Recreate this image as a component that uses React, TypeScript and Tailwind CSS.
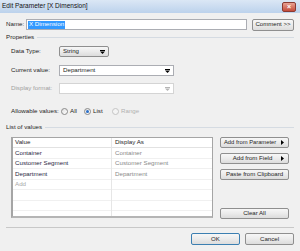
import { ReactNode } from 'react';

const Btn = ({ children, className = '' }: { children: ReactNode; className?: string }) => (
    <div
        className={`flex items-center justify-center whitespace-nowrap rounded-[2px] border border-[#8f8f8f] bg-linear-to-b from-[#f7f7f7] via-[#ebebeb] to-[#dcdcdc] text-[6.1px] text-[#1e1e1e] ${className}`}
    >
        {children}
    </div>
);

const Arrow = ({ color = '#000' }: { color?: string }) => (
    <svg width="5" height="4" viewBox="0 0 5 4">
        <rect x="0" y="0" width="5" height="1" fill={color} />
        <path d="M0 1.5 H5 L2.5 4 Z" fill={color} />
    </svg>
);

const SideArrow = () => (
    <svg width="3" height="5" viewBox="0 0 3 5">
        <path d="M0 0 L3 2.5 L0 5 Z" fill="#000" />
    </svg>
);

const Radio = ({ checked = false, disabled = false }: { checked?: boolean; disabled?: boolean }) => (
    <div
        className={`flex size-[7px] items-center justify-center rounded-full border ${disabled ? 'border-[#c4c4c4] bg-[#f4f4f4]' : 'border-[#8a8a8a] bg-linear-to-br from-[#e0e0e0] to-[#ffffff]'}`}
    >
        {checked && <div className="size-[3px] rounded-full bg-[#2a6fc9]" />}
    </div>
);

const rows = [
    { value: 'Container', display: 'Container' },
    { value: 'Customer Segment', display: 'Customer Segment' },
    { value: 'Department', display: 'Department' },
    { value: 'Add', display: '', add: true },
    { value: '', display: '' },
    { value: '', display: '' },
    { value: '', display: '' },
];

const App = () => {
    return (
        <div className="flex h-[251px] w-[300px] flex-col overflow-hidden whitespace-nowrap bg-[#f0f0f0] font-['Liberation_Sans',Arial,sans-serif] text-[6.2px] leading-none text-[#1e1e1e]">
            {/* Title bar */}
            <div className="flex h-[13px] shrink-0 items-center justify-between bg-linear-to-b from-[#dbe7f5] to-[#bcd2ec] pl-[2px] pr-[4px]">
                <span className="text-[6.5px] text-[#111]">Edit Parameter [X Dimension]</span>
                <div className="flex h-[10px] w-[14px] items-center justify-center rounded-[2px] border border-[#8a3a32] bg-linear-to-b from-[#e8a193] to-[#c44a3a] text-[7px] font-bold text-white">
                    ×
                </div>
            </div>

            {/* Name */}
            <div className="mt-[6px] flex h-[11px] items-center pl-[6px]">
                <span className="w-[20px]">Name:</span>
                <div className="flex h-[11px] w-[221px] items-center border border-[#abadb3] bg-white pl-[1px]">
                    <span className="flex h-[8px] items-center bg-[#3399ff] px-[1px] text-white">X Dimension</span>
                </div>
                <Btn className="ml-[5px] h-[12px] w-[42px]">Comment &gt;&gt;</Btn>
            </div>

            {/* Properties header */}
            <div className="mt-[3px] flex h-[8px] items-center pl-[6px] pr-[6px]">
                <span>Properties</span>
                <div className="ml-[3px] h-px flex-1 bg-[#d5dbe2]" />
            </div>

            {/* Data type */}
            <div className="mt-[5px] flex h-[11px] items-center pl-[11px]">
                <span className="w-[48px]">Data Type:</span>
                <Btn className="h-[11px] w-[50px] !justify-between pl-[3px] pr-[3px]">
                    <span>String</span>
                    <Arrow />
                </Btn>
            </div>

            {/* Current value */}
            <div className="mt-[8px] flex h-[11px] items-center pl-[11px]">
                <span className="w-[48px]">Current value:</span>
                <div className="flex h-[11px] w-[115px] items-center justify-between border border-[#abadb3] bg-white pl-[3px] pr-[3px]">
                    <span>Department</span>
                    <Arrow />
                </div>
            </div>

            {/* Display format */}
            <div className="mt-[7px] flex h-[11px] items-center pl-[11px]">
                <span className="w-[48px] text-[#a0a0a0]">Display format:</span>
                <div className="flex h-[11px] w-[115px] items-center justify-end border border-[#d4d4d4] bg-white pr-[3px]">
                    <Arrow color="#b5b5b5" />
                </div>
            </div>

            {/* Allowable values */}
            <div className="mt-[12px] flex h-[10px] items-center pl-[11px]">
                <span className="w-[50px]">Allowable values:</span>
                <Radio />
                <span className="ml-[2px] w-[14px]">All</span>
                <Radio checked />
                <span className="ml-[2px] w-[19px]">List</span>
                <Radio disabled />
                <span className="ml-[2px] text-[#b0b0b0]">Range</span>
            </div>

            {/* List of values header */}
            <div className="mt-[7px] flex h-[8px] items-center pl-[6px] pr-[6px]">
                <span>List of values</span>
                <div className="ml-[3px] h-px flex-1 bg-[#d5dbe2]" />
            </div>

            {/* Table + side buttons */}
            <div className="mt-[6px] flex pl-[11px]">
                <div className="relative h-[81px] w-[202px] overflow-hidden border-t border-r border-b-2 border-l-2 border-[#a5a5a5] border-b-[#b5b5b5] bg-white">
                    <div className="absolute top-0 bottom-0 left-[98px] w-px bg-[#e6e6e6]" />
                    <div className="flex h-[10px] items-center border-b border-[#e2e2e2]">
                        <span className="w-[99px] pl-[2px]">Value</span>
                        <span className="pl-[3px]">Display As</span>
                    </div>
                    {rows.map((r, i) => (
                        <div key={i} className="flex h-[10.5px] items-center border-b border-[#f0f0f0]">
                            <span className={`w-[99px] pl-[2px] ${r.add ? 'text-[#a8a8a8]' : 'text-[#2b1f45]'}`}>{r.value}</span>
                            <span className="pl-[3px] text-[#8a8a8a]">{r.display}</span>
                        </div>
                    ))}
                </div>
                <div className="ml-[7px] flex flex-col">
                    <Btn className="h-[11px] w-[69px] !justify-between pl-[3px] pr-[4px]">
                        <span className="text-[5.8px]">Add from Parameter</span>
                        <SideArrow />
                    </Btn>
                    <Btn className="mt-[5px] h-[11px] w-[69px] pl-[3px] pr-[4px]">
                        <span className="flex-1 text-center">Add from Field</span>
                        <SideArrow />
                    </Btn>
                    <Btn className="mt-[5px] h-[11px] w-[69px]">Paste from Clipboard</Btn>
                    <Btn className="mt-[28px] h-[11px] w-[69px]">Clear All</Btn>
                </div>
            </div>

            {/* Bottom separator */}
            <div className="mx-[6px] mt-[8px] h-px bg-[#c8c8c8]" />

            {/* OK / Cancel */}
            <div className="mt-[5px] flex justify-end pr-[6px]">
                <Btn className="h-[12px] w-[49px] !border-[#3c7fb1] from-[#eaf6fd] to-[#d5ebf8]">OK</Btn>
                <Btn className="ml-[5px] h-[12px] w-[49px]">Cancel</Btn>
            </div>
        </div>
    );
};

export default App;
